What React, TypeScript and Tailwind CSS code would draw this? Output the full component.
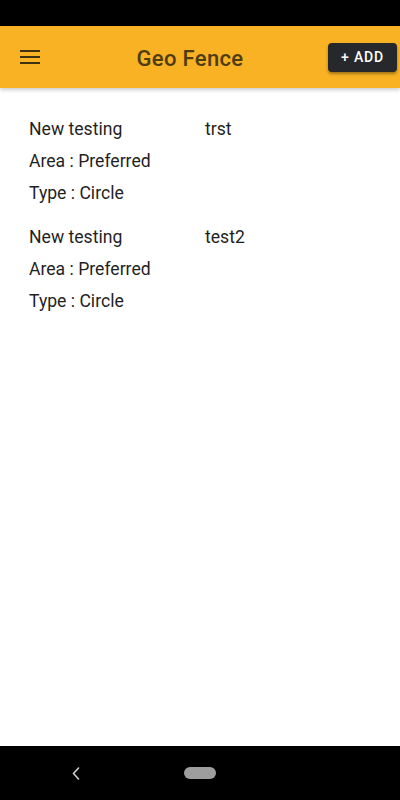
const items = [
  { name: "New testing", label: "trst", area: "Preferred", type: "Circle" },
  { name: "New testing", label: "test2", area: "Preferred", type: "Circle" },
];

export default function App() {
  return (
    <div className="flex h-[800px] w-[400px] flex-col bg-white font-['Roboto',sans-serif]">
      <div className="h-[26px] shrink-0 bg-black" />

      <header className="relative z-10 flex h-[62px] shrink-0 items-center bg-[#f8b223] shadow-[0_2px_4px_rgba(0,0,0,0.2)]">
        <button type="button" className="ml-[20px] flex h-[22px] w-[22px] flex-col justify-center gap-[4px]">
          <span className="block h-[2px] w-[20px] bg-[#3f3210]" />
          <span className="block h-[2px] w-[20px] bg-[#3f3210]" />
          <span className="block h-[2px] w-[20px] bg-[#3f3210]" />
        </button>
        <h1 className="mt-[2px] flex-1 pl-[10px] text-center text-[22px] font-medium tracking-[0.015em] text-[#4d3c14]">
          Geo Fence
        </h1>
        <button
          type="button"
          className="mr-[3px] h-[29px] w-[69px] rounded-[4px] bg-[#26282c] text-[14px] font-medium tracking-[0.06em] text-white shadow-[0_2px_3px_rgba(0,0,0,0.35)]"
        >
          + ADD
        </button>
      </header>

      <main className="flex-1 px-[29px] pt-[25px] text-[17.6px] text-[#1f1f1f]">
        {items.map((item, i) => (
          <div key={i} className={i > 0 ? "mt-[12px]" : ""}>
            <div className="flex h-[32px] items-center">
              <span className="w-[176px]">{item.name}</span>
              <span>{item.label}</span>
            </div>
            <div className="flex h-[32px] items-center">Area : {item.area}</div>
            <div className="flex h-[32px] items-center">Type : {item.type}</div>
          </div>
        ))}
      </main>

      <nav className="relative flex h-[54px] shrink-0 items-center justify-center bg-black">
        <svg
          className="absolute left-[72px] top-[21px]"
          width="8"
          height="13"
          viewBox="0 0 8 13"
          fill="none"
          stroke="#cfcfcf"
          strokeWidth="1.6"
          strokeLinecap="round"
          strokeLinejoin="round"
        >
          <path d="M6.5 1 L1.5 6.5 L6.5 12" />
        </svg>
        <span className="block h-[12px] w-[32px] rounded-full bg-[#9e9e9e]" />
      </nav>
    </div>
  );
}
